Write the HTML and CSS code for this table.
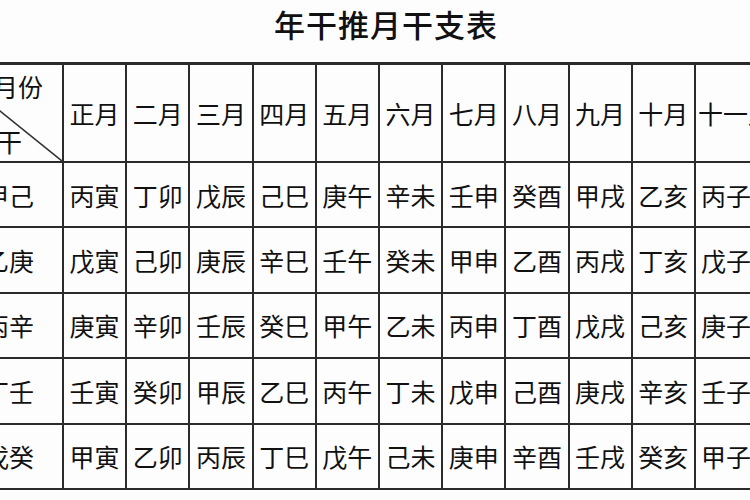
FILE: index.html
```html
<!DOCTYPE html>
<html lang="zh">
<head>
<meta charset="utf-8">
<title>年干推月干支表</title>
<link rel="stylesheet" href="styles.css">
</head>
<body>
<div class="page">
  <h1 class="title">年干推月干支表</h1>
  <table class="tbl">
    <colgroup>
      <col class="c-first">
      <col class="c-m"><col class="c-m"><col class="c-m"><col class="c-m">
      <col class="c-m"><col class="c-m"><col class="c-m"><col class="c-m">
      <col class="c-m"><col class="c-m"><col class="c-wide"><col class="c-wide">
    </colgroup>
    <thead>
      <tr class="head">
        <th class="corner">
          <svg class="slash" viewBox="0 0 100 100" preserveAspectRatio="none"><line x1="0" y1="0" x2="100" y2="100" vector-effect="non-scaling-stroke"/></svg>
          <span class="lab-month">月份</span>
          <span class="lab-gan">年干</span>
        </th>
        <th>正月</th><th>二月</th><th>三月</th><th>四月</th><th>五月</th><th>六月</th>
        <th>七月</th><th>八月</th><th>九月</th><th>十月</th><th>十一月</th><th>十二月</th>
      </tr>
    </thead>
    <tbody>
      <tr><th class="rl">甲己</th><td>丙寅</td><td>丁卯</td><td>戊辰</td><td>己巳</td><td>庚午</td><td>辛未</td><td>壬申</td><td>癸酉</td><td>甲戌</td><td>乙亥</td><td>丙子</td><td>丁丑</td></tr>
      <tr><th class="rl">乙庚</th><td>戊寅</td><td>己卯</td><td>庚辰</td><td>辛巳</td><td>壬午</td><td>癸未</td><td>甲申</td><td>乙酉</td><td>丙戌</td><td>丁亥</td><td>戊子</td><td>己丑</td></tr>
      <tr><th class="rl">丙辛</th><td>庚寅</td><td>辛卯</td><td>壬辰</td><td>癸巳</td><td>甲午</td><td>乙未</td><td>丙申</td><td>丁酉</td><td>戊戌</td><td>己亥</td><td>庚子</td><td>辛丑</td></tr>
      <tr><th class="rl">丁壬</th><td>壬寅</td><td>癸卯</td><td>甲辰</td><td>乙巳</td><td>丙午</td><td>丁未</td><td>戊申</td><td>己酉</td><td>庚戌</td><td>辛亥</td><td>壬子</td><td>癸丑</td></tr>
      <tr><th class="rl">戊癸</th><td>甲寅</td><td>乙卯</td><td>丙辰</td><td>丁巳</td><td>戊午</td><td>己未</td><td>庚申</td><td>辛酉</td><td>壬戌</td><td>癸亥</td><td>甲子</td><td>乙丑</td></tr>
    </tbody>
  </table>
</div>
</body>
</html>
```
FILE: styles.css
```css
html, body {
  margin: 0;
  padding: 0;
  background: #fdfdfd;
  overflow: hidden;
}
.page {
  width: 750px;
  height: 500px;
  overflow: hidden;
  font-family: "Noto Sans CJK SC", "Noto Sans CJK JP", sans-serif;
  color: #111;
}
.title {
  margin: 0;
  height: 62px;
  line-height: 48px;
  padding-left: 22px;
  text-align: center;
  font-size: 31px;
  font-weight: 500;
  letter-spacing: 1px;
}
.tbl {
  margin-left: -59px;
  border-collapse: collapse;
  table-layout: fixed;
  width: 913px;
}
.c-first { width: 121px; }
.c-m { width: 63.2px; }
.c-wide { width: 80px; }
.tbl th, .tbl td {
  border: 2px solid #2b2b2b;
  padding: 0;
  font-size: 25px;
  font-weight: 400;
  text-align: center;
  white-space: nowrap;
  overflow: hidden;
  line-height: 30px;
}
.tbl thead th {
  border-top-width: 3px;
}
.head th {
  height: 96px;
}
.tbl th:nth-child(n+12),
.tbl td:nth-child(n+12) {
  text-align: left;
  padding-left: 2px;
}
.tbl td:nth-child(n+12) {
  padding-left: 5px;
}
.tbl tbody td, .tbl tbody th {
  height: 63.4px;
}
.rl {
  padding-left: 13px !important;
}
.corner {
  position: relative;
}
.slash {
  position: absolute;
  left: 0;
  top: 0;
  width: 100%;
  height: 100%;
}
.slash line {
  stroke: #333;
  stroke-width: 1.6;
}
.lab-month {
  position: absolute;
  right: 19px;
  top: 6px;
}
.lab-gan {
  position: absolute;
  left: 29px;
  top: 61px;
}
```
